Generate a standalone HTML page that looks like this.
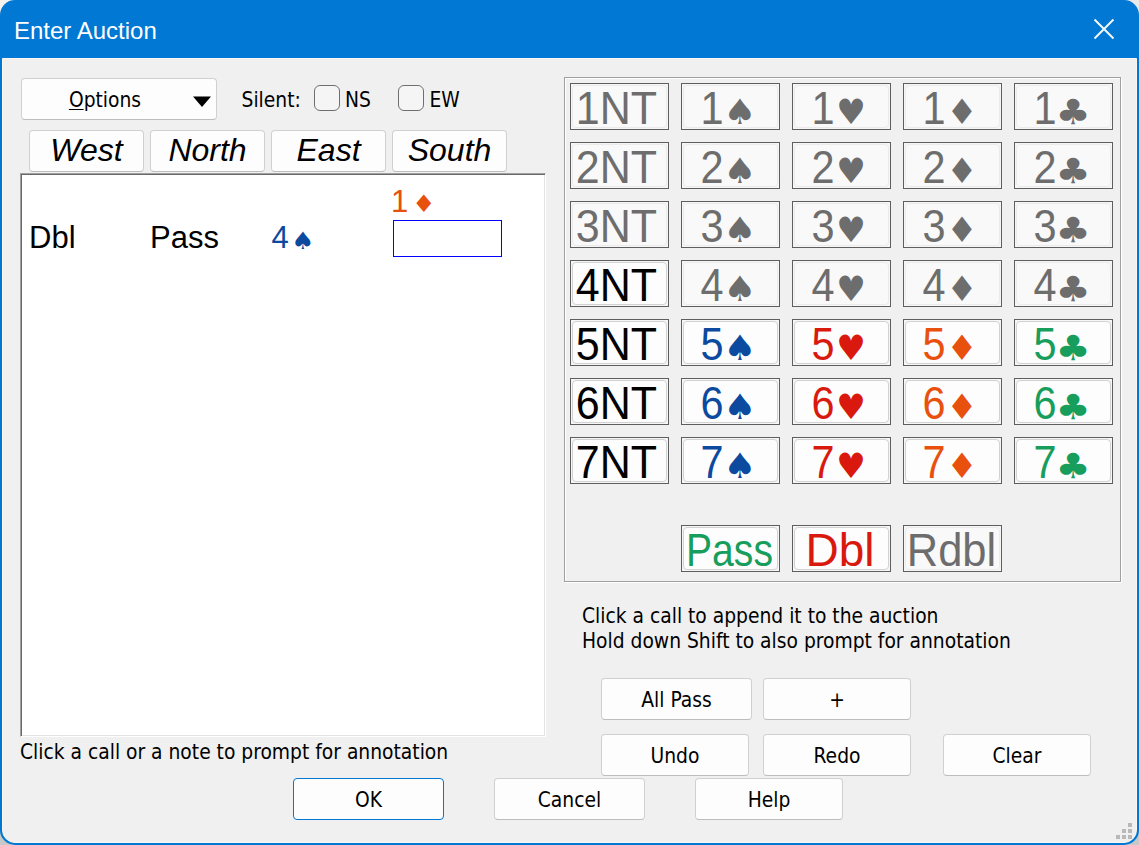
<!DOCTYPE html>
<html lang="en">
<head>
<meta charset="utf-8">
<title>Enter Auction</title>
<style>
*{box-sizing:border-box}
html,body{margin:0;padding:0}
body{width:1139px;height:845px;overflow:hidden;background:#ececec;position:relative;font-family:"DejaVu Sans Condensed","DejaVu Sans","Liberation Sans",sans-serif;font-size:20.8px;color:#000}
.abs,.win *{position:absolute}
.win{position:absolute;left:0;top:0;width:1139px;height:845px;background:#0078d4;border-radius:15px;overflow:hidden}
.title{left:14px;top:14px;height:34px;line-height:34px;color:#fff;font-family:"Liberation Sans","DejaVu Sans",sans-serif;font-size:24px;white-space:nowrap}
.client{left:2px;top:58px;width:1135px;height:785px;background:#f0f0f0;border:1px solid #fbf6f0;border-radius:0 0 13px 13px}
.btn{background:#fdfdfd;border:1px solid #d0d0d0;border-bottom-color:#bdbdbd;border-radius:4px}
.btn span,.lbl{white-space:nowrap;line-height:26px;height:26px;font-stretch:condensed}
.btn span{left:0;right:0;text-align:center}
.seat{font-family:"Liberation Sans","DejaVu Sans",sans-serif;font-style:italic;font-size:32px}
.chk{width:26px;height:26px;border:1.5px solid #6f6f6f;border-radius:6px;background:#f5f5f5}
.list{left:20px;top:173px;width:526px;height:564px;background:#fff;border:1px solid;border-color:#a0a0a0 #fff #fff #a0a0a0;box-shadow:inset 1px 1px 0 #696969,inset -1px -1px 0 #e3e3e3}
.lt{font-family:"Liberation Sans","DejaVu Sans",sans-serif;font-size:31px;line-height:36px;height:36px;white-space:nowrap}
.ls{font-family:"DejaVu Sans","Liberation Sans",sans-serif;font-size:24px;line-height:36px;height:36px;width:20px;text-align:center;white-space:nowrap}
.grp{left:564px;top:77px;width:557px;height:505px;border:1px solid #a0a0a0;box-shadow:inset 1px 1px 0 #fff, 1px 1px 0 #fff}
.bb{width:99px;height:47px;border:1px solid #5e5e5e;background:#f6f6f6}
.bb .in{left:1px;top:1px;right:1px;bottom:1px;border:1px solid #d2d2d2;border-radius:4px;background:#fdfdfd}
.bb.d .in{border-color:#ebebeb;background:#f9f9f9}
.bb .dg,.bb .tx,.bb .su{white-space:nowrap;line-height:46px;height:46px;top:1px}
.bb .dg{font-family:"Liberation Sans","DejaVu Sans",sans-serif;font-size:46px;left:0;width:60px;text-align:center;transform:scaleX(.9)}
.bb .su{font-family:"DejaVu Sans","Liberation Sans",sans-serif;font-size:35px;left:38px;width:40px;text-align:center;top:4.5px}
.bb .tx{font-family:"Liberation Sans","DejaVu Sans",sans-serif;font-size:46px;left:-21.5px;right:-18.5px;text-align:center}
.sS{transform:scaleX(1.06)}.sH{font-size:33px !important;transform:scaleY(1.06)}.sD{}.sC{transform:scaleX(1.12)}
.d{color:#6d6d6d}
.cS{color:#0b4a9e}.cH{color:#d9190d}.cD{color:#e8500e}.cC{color:#179e5c}.cN{color:#000}
.grip{width:4px;height:4px;background:#b9b9b9}
</style>
</head>
<body>
<div class="abs" style="left:0;top:0;width:20px;height:20px;background:#f6f3ef"></div>
<div class="abs" style="right:0;top:0;width:20px;height:20px;background:#e9e9e9"></div>
<div class="abs" style="left:0;bottom:0;width:20px;height:20px;background:#c8c8c8"></div>
<div class="abs" style="right:0;bottom:0;width:20px;height:20px;background:#c8c8c8"></div>
<div class="win">
<div class="title">Enter Auction</div>
<svg style="left:1093px;top:18px" width="22" height="22" viewBox="0 0 22 22"><path d="M1.5 1.5 L20.5 20.5 M20.5 1.5 L1.5 20.5" stroke="#f7f7f7" stroke-width="1.9" fill="none"/></svg>
<div class="client"></div>
<div class="btn " style="left:21px;top:78px;width:196px;height:42px;"><span style="top:7.5px;margin-left:-28px"><span style="position:static;text-decoration:underline;text-decoration-thickness:1px;text-underline-offset:1.5px">O</span>ptions</span><svg style="left:168.5px;top:15.5px" width="24" height="14" viewBox="0 0 24 14"><path d="M2 1.5 H20 L11 12 Z" fill="#000"/></svg></div>
<div class="lbl" style="left:241.5px;top:86.5px">Silent:</div>
<div class="chk" style="left:314px;top:85px"></div>
<div class="lbl" style="left:345px;top:86.5px">NS</div>
<div class="chk" style="left:398px;top:85px"></div>
<div class="lbl" style="left:429.5px;top:86.5px">EW</div>
<div class="btn" style="left:29px;top:130px;width:115px;height:42px"><span class="seat" style="top:0px;height:40px;line-height:38px">West</span></div>
<div class="btn" style="left:150px;top:130px;width:115px;height:42px"><span class="seat" style="top:0px;height:40px;line-height:38px">North</span></div>
<div class="btn" style="left:271px;top:130px;width:115px;height:42px"><span class="seat" style="top:0px;height:40px;line-height:38px">East</span></div>
<div class="btn" style="left:392px;top:130px;width:115px;height:42px"><span class="seat" style="top:0px;height:40px;line-height:38px">South</span></div>
<div class="list"></div>
<div class="lt cD" style="left:391px;top:183.5px">1</div>
<div class="ls cD" style="left:413px;top:185.5px;transform:scaleX(1.1)">♦</div>
<div class="lt" style="left:29px;top:219.5px">Dbl</div>
<div class="lt" style="left:150px;top:219.5px">Pass</div>
<div class="lt cS" style="left:271.5px;top:220px">4</div>
<div class="ls cS" style="left:291.5px;top:222.5px;transform:scaleX(1.08)">♠</div>
<div style="left:393px;top:220px;width:109px;height:37px;border:1px solid #0000ff"></div>
<div class="lbl" style="left:20px;top:739px">Click a call or a note to prompt for annotation</div>
<div class="btn " style="left:293px;top:778px;width:151px;height:42px;border-color:#0078d4"><span style="top:7.5px;margin-left:0px">OK</span></div>
<div class="btn " style="left:494px;top:778px;width:151px;height:42px;"><span style="top:7.5px;margin-left:0px">Cancel</span></div>
<div class="btn " style="left:695px;top:778px;width:148px;height:42px;"><span style="top:7.5px;margin-left:0px">Help</span></div>
<div class="grp"></div>
<div class="bb d" style="left:570px;top:83px"><span class="in"></span><span class="tx" style="transform:scaleX(.935);left:-22.7px;right:-17.3px">1NT</span></div>
<div class="bb d" style="left:681px;top:83px"><span class="in"></span><span class="dg">1</span><span class="su sS">♠</span></div>
<div class="bb d" style="left:792px;top:83px"><span class="in"></span><span class="dg">1</span><span class="su sH">♥</span></div>
<div class="bb d" style="left:903px;top:83px"><span class="in"></span><span class="dg">1</span><span class="su sD">♦</span></div>
<div class="bb d" style="left:1014px;top:83px"><span class="in"></span><span class="dg">1</span><span class="su sC">♣</span></div>
<div class="bb d" style="left:570px;top:142px"><span class="in"></span><span class="tx" style="transform:scaleX(.935);left:-22.7px;right:-17.3px">2NT</span></div>
<div class="bb d" style="left:681px;top:142px"><span class="in"></span><span class="dg">2</span><span class="su sS">♠</span></div>
<div class="bb d" style="left:792px;top:142px"><span class="in"></span><span class="dg">2</span><span class="su sH">♥</span></div>
<div class="bb d" style="left:903px;top:142px"><span class="in"></span><span class="dg">2</span><span class="su sD">♦</span></div>
<div class="bb d" style="left:1014px;top:142px"><span class="in"></span><span class="dg">2</span><span class="su sC">♣</span></div>
<div class="bb d" style="left:570px;top:201px"><span class="in"></span><span class="tx" style="transform:scaleX(.935);left:-22.7px;right:-17.3px">3NT</span></div>
<div class="bb d" style="left:681px;top:201px"><span class="in"></span><span class="dg">3</span><span class="su sS">♠</span></div>
<div class="bb d" style="left:792px;top:201px"><span class="in"></span><span class="dg">3</span><span class="su sH">♥</span></div>
<div class="bb d" style="left:903px;top:201px"><span class="in"></span><span class="dg">3</span><span class="su sD">♦</span></div>
<div class="bb d" style="left:1014px;top:201px"><span class="in"></span><span class="dg">3</span><span class="su sC">♣</span></div>
<div class="bb cN" style="left:570px;top:260px"><span class="in"></span><span class="tx" style="transform:scaleX(.935);left:-22.7px;right:-17.3px">4NT</span></div>
<div class="bb d" style="left:681px;top:260px"><span class="in"></span><span class="dg">4</span><span class="su sS">♠</span></div>
<div class="bb d" style="left:792px;top:260px"><span class="in"></span><span class="dg">4</span><span class="su sH">♥</span></div>
<div class="bb d" style="left:903px;top:260px"><span class="in"></span><span class="dg">4</span><span class="su sD">♦</span></div>
<div class="bb d" style="left:1014px;top:260px"><span class="in"></span><span class="dg">4</span><span class="su sC">♣</span></div>
<div class="bb cN" style="left:570px;top:319px"><span class="in"></span><span class="tx" style="transform:scaleX(.935);left:-22.7px;right:-17.3px">5NT</span></div>
<div class="bb cS" style="left:681px;top:319px"><span class="in"></span><span class="dg">5</span><span class="su sS">♠</span></div>
<div class="bb cH" style="left:792px;top:319px"><span class="in"></span><span class="dg">5</span><span class="su sH">♥</span></div>
<div class="bb cD" style="left:903px;top:319px"><span class="in"></span><span class="dg">5</span><span class="su sD">♦</span></div>
<div class="bb cC" style="left:1014px;top:319px"><span class="in"></span><span class="dg">5</span><span class="su sC">♣</span></div>
<div class="bb cN" style="left:570px;top:378px"><span class="in"></span><span class="tx" style="transform:scaleX(.935);left:-22.7px;right:-17.3px">6NT</span></div>
<div class="bb cS" style="left:681px;top:378px"><span class="in"></span><span class="dg">6</span><span class="su sS">♠</span></div>
<div class="bb cH" style="left:792px;top:378px"><span class="in"></span><span class="dg">6</span><span class="su sH">♥</span></div>
<div class="bb cD" style="left:903px;top:378px"><span class="in"></span><span class="dg">6</span><span class="su sD">♦</span></div>
<div class="bb cC" style="left:1014px;top:378px"><span class="in"></span><span class="dg">6</span><span class="su sC">♣</span></div>
<div class="bb cN" style="left:570px;top:437px"><span class="in"></span><span class="tx" style="transform:scaleX(.935);left:-22.7px;right:-17.3px">7NT</span></div>
<div class="bb cS" style="left:681px;top:437px"><span class="in"></span><span class="dg">7</span><span class="su sS">♠</span></div>
<div class="bb cH" style="left:792px;top:437px"><span class="in"></span><span class="dg">7</span><span class="su sH">♥</span></div>
<div class="bb cD" style="left:903px;top:437px"><span class="in"></span><span class="dg">7</span><span class="su sD">♦</span></div>
<div class="bb cC" style="left:1014px;top:437px"><span class="in"></span><span class="dg">7</span><span class="su sC">♣</span></div>
<div class="bb cC" style="left:681px;top:525px"><span class="in"></span><span class="tx" style="transform:scaleX(0.85)">Pass</span></div>
<div class="bb cH" style="left:792px;top:525px"><span class="in"></span><span class="tx" style="transform:scaleX(1.0)">Dbl</span></div>
<div class="bb d" style="left:903px;top:525px"><span class="in"></span><span class="tx" style="transform:scaleX(0.945)">Rdbl</span></div>
<div class="lbl" style="left:582px;top:603px">Click a call to append it to the auction</div>
<div class="lbl" style="left:582px;top:627.5px">Hold down Shift to also prompt for annotation</div>
<div class="btn " style="left:601px;top:678px;width:151px;height:42px;"><span style="top:7.5px;margin-left:0px">All Pass</span></div>
<div class="btn " style="left:763px;top:678px;width:148px;height:42px;"><span style="top:7.5px;margin-left:0px">+</span></div>
<div class="btn " style="left:601px;top:734px;width:148px;height:42px;"><span style="top:7.5px;margin-left:0px">Undo</span></div>
<div class="btn " style="left:763px;top:734px;width:148px;height:42px;"><span style="top:7.5px;margin-left:0px">Redo</span></div>
<div class="btn " style="left:943px;top:734px;width:148px;height:42px;"><span style="top:7.5px;margin-left:0px">Clear</span></div>
<div class="grip" style="left:1128px;top:823px"></div>
<div class="grip" style="left:1122px;top:829px"></div>
<div class="grip" style="left:1128px;top:829px"></div>
<div class="grip" style="left:1116px;top:835px"></div>
<div class="grip" style="left:1122px;top:835px"></div>
<div class="grip" style="left:1128px;top:835px"></div>
</div>
</body>
</html>
